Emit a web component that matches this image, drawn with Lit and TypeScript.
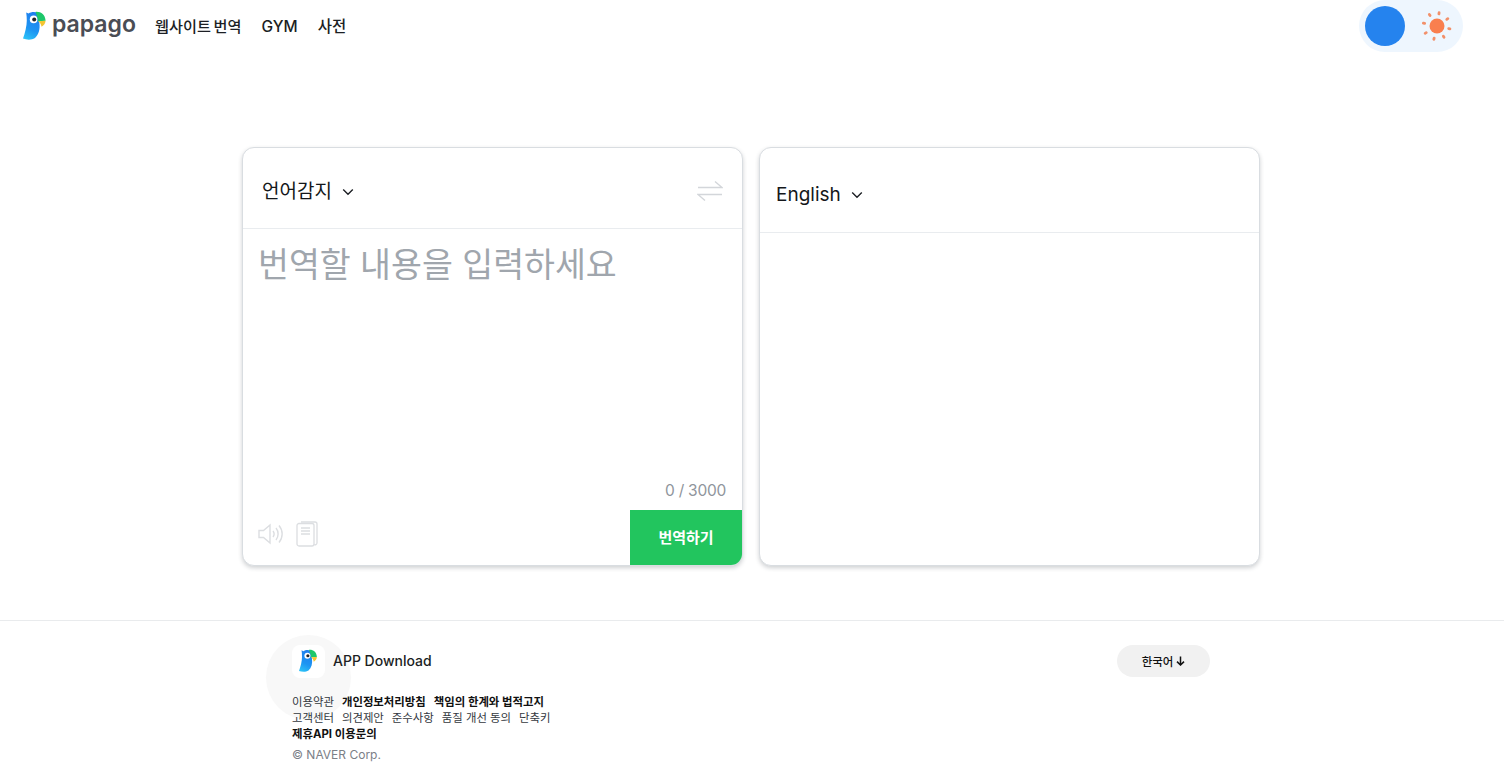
import { LitElement, html, css, svg } from "lit";
import { customElement } from "lit/decorators.js";

const parrot = svg`
  <defs>
    <linearGradient id="pb" x1="0.6" y1="0" x2="0.3" y2="1">
      <stop offset="0" stop-color="#1f7fee"/>
      <stop offset="0.6" stop-color="#1d94f2"/>
      <stop offset="1" stop-color="#2bc0f7"/>
    </linearGradient>
  </defs>
  <path d="M3.2 1.4 L5.6 2.6 C8 0.8 12 0.6 15 2 L16.4 12 C17.2 18 15.8 23.5 12 27 C8.5 29.2 4 29 0 27.6 C2 22 3.8 15 3.8 9.5 C3.8 6.5 3.6 4 3.2 1.4 Z" fill="url(#pb)"/>
  <path d="M12.5 0.9 C17.8 0.4 22.2 3.6 22.6 9.8 L15 10.2 C14.6 7 13.8 3.6 12.5 0.9 Z" fill="#1ec76a"/>
  <path d="M15 10.2 L22.6 9.8 C22.4 12.4 21 14.4 18.6 15.8 C18.2 13.4 17 11.4 15 10.2 Z" fill="#f4c531"/>
  <circle cx="10.6" cy="8.4" r="3.8" fill="#fff"/>
  <circle cx="11.2" cy="8.4" r="2" fill="#20252c"/>
`;

const rays: [number, number][] = [
  [-7.3, -11], [2, -12.7], [10.3, -7], [12.3, 2.7],
  [6.7, 10.7], [-3, 12.7], [-11.3, 7], [-13, -2.7],
];

@customElement("app-root")
export class AppRoot extends LitElement {
  static styles = css`
    :host {
      display: block;
      position: relative;
      width: 100%;
      height: 768px;
      overflow: hidden;
      background: #fff;
      font-family: Inter, "Noto Sans CJK KR", sans-serif;
      color: #111418;
    }
    .top {
      height: 52px;
      display: flex;
      align-items: center;
      padding: 0 41px 0 23px;
    }
    .logo-mark { width: 24px; height: 30px; flex: none; }
    .logo-text {
      margin-left: 5px;
      width: 83px;
      font-size: 23px;
      font-weight: 600;
      color: #4a4d55;
      line-height: 28px;
      position: relative;
      top: -2px;
    }
    nav {
      display: flex;
      gap: 20px;
      margin-left: 20px;
      padding-top: 2px;
      font-size: 15.5px;
      line-height: 20px;
      font-weight: 500;
      color: #1c1f24;
    }
    .tight { font-size: 15.2px; word-spacing: -1.4px; }
    .spacer { flex: 1; }
    .toggle {
      width: 104px;
      height: 52px;
      border-radius: 26px;
      background: #eef6fe;
      display: flex;
      align-items: center;
      padding: 0 6px;
      box-sizing: border-box;
      gap: 16px;
    }
    .knob { width: 40px; height: 40px; border-radius: 50%; background: #2583ee; flex: none; }
    .sun { width: 32px; height: 32px; flex: none; }
    main {
      display: flex;
      gap: 16px;
      padding: 95px 0 0 242px;
      height: 419px;
    }
    .card {
      width: 501px;
      height: 419px;
      box-sizing: border-box;
      border: 1px solid #d9dde1;
      border-radius: 12px;
      box-shadow: 0 2px 4px rgba(40, 50, 60, 0.22);
      display: flex;
      flex-direction: column;
      overflow: hidden;
      background: #fff;
    }
    .head {
      flex: none;
      display: flex;
      align-items: center;
      border-bottom: 1px solid #e9ecef;
      box-sizing: border-box;
    }
    .head.l { height: 81px; padding: 14px 19px 6px 19px; }
    .head.r { height: 85px; padding: 10px 16px 0 16px; }
    .lang { font-size: 19px; line-height: 26px; color: #14171a; }
    .chev { width: 12px; height: 8px; margin-left: 10px; flex: none; }
    .swap { width: 26px; height: 22px; margin-left: auto; position: relative; top: -1px; }
    .body { flex: 1; position: relative; display: flex; flex-direction: column; min-height: 0; }
    .ph {
      font-size: 33.6px;
      line-height: 46px;
      color: #a0a6ad;
      padding: 13px 0 0 15px;
    }
    .count {
      margin-top: auto;
      align-self: flex-end;
      padding-right: 16px;
      font-size: 15.5px;
      letter-spacing: -0.25px;
      line-height: 22px;
      color: #8f959c;
      margin-bottom: 8px;
    }
    .foot { height: 55px; display: flex; flex: none; align-items: center; padding-left: 15px; }
    .icons { display: flex; align-items: center; gap: 12px; position: relative; top: -4px; }
    .ico-a { width: 26px; height: 22px; }
    .ico-b { width: 22px; height: 26px; }
    .go {
      margin-left: auto;
      width: 112px;
      height: 55px;
      box-sizing: border-box;
      padding-bottom: 2px;
      background: #22c55e;
      color: #fff;
      font-size: 15px;
      font-weight: 700;
      display: flex;
      align-items: center;
      justify-content: center;
    }
    footer {
      position: absolute;
      left: 0;
      right: 0;
      top: 620px;
      bottom: 0;
      border-top: 1px solid #e9ebed;
      box-sizing: border-box;
      padding: 24px 294px 0 292px;
    }
    .halo {
      position: absolute;
      left: 266px;
      top: 14px;
      width: 85px;
      height: 85px;
      border-radius: 50%;
      background: #f8f8f8;
    }
    .frow { position: relative; display: flex; align-items: center; height: 32px; }
    .app {
      width: 33px;
      height: 33px;
      border-radius: 8px;
      background: #fff;
      display: flex;
      align-items: center;
      justify-content: center;
      flex: none;
    }
    .app svg { width: 19px; height: 24px; }
    .dl { margin-left: 8px; font-size: 14px; line-height: 18px; font-weight: 500; color: #1c1f24; }
    .pill {
      margin-left: auto;
      width: 93px;
      height: 32px;
      border-radius: 16px;
      background: #f1f1f1;
      display: flex;
      align-items: center;
      justify-content: center;
      gap: 3px;
      font-size: 11.5px;
      font-weight: 500;
      color: #111;
    }
    .pill svg { width: 9px; height: 10px; }
    .links {
      position: relative;
      margin-top: 17px;
      font-size: 11.4px;
      line-height: 16px;
      color: #33383e;
    }
    .line { display: flex; gap: 8px; height: 16px; }
    b { font-weight: 700; color: #111; }
    .copy { position: relative; margin-top: 5px; font-size: 12px; line-height: 16px; color: #7b8087; }
  `;

  render() {
    const chev = html`<svg class="chev" viewBox="0 0 12 8"><path d="M1.2 1.6 L6 6.2 L10.8 1.6" fill="none" stroke="#1c1f24" stroke-width="1.4"/></svg>`;
    return html`
      <header class="top">
        <svg class="logo-mark" viewBox="0 0 24 30">${parrot}</svg>
        <span class="logo-text">papago</span>
        <nav><span class="tight">웹사이트 번역</span><span>GYM</span><span>사전</span></nav>
        <div class="spacer"></div>
        <div class="toggle">
          <div class="knob"></div>
          <svg class="sun" viewBox="0 0 32 32">
            <circle cx="16" cy="16" r="7.5" fill="#f97f4f"/>
            <g stroke="#f2906a" stroke-width="2.8" stroke-linecap="round">
              ${rays.map(
                ([x, y]) => svg`<line x1=${16 + x * 0.95} y1=${16 + y * 0.95} x2=${16 + x * 1.05} y2=${16 + y * 1.05}></line>`
              )}
            </g>
          </svg>
        </div>
      </header>

      <main>
        <section class="card">
          <div class="head l">
            <span class="lang">언어감지</span>${chev}
            <svg class="swap" viewBox="0 0 26 22" fill="none" stroke="#d3d6da" stroke-width="1.4">
              <path d="M1 7.5 H25 L18 1.5"/><path d="M25 14.5 H1 L8 20.5"/>
            </svg>
          </div>
          <div class="body">
            <div class="ph">번역할 내용을 입력하세요</div>
            <div class="count">0 / 3000</div>
            <div class="foot">
              <div class="icons">
                <svg class="ico-a" viewBox="0 0 26 22" fill="none" stroke="#dcdee1" stroke-width="1.4">
                  <path d="M1 7.5 H5.5 L12 2 V20 L5.5 14.5 H1 Z"/>
                  <path d="M15 8 C16.5 10 16.5 12 15 14"/>
                  <path d="M18 5 C20.8 8.5 20.8 13.5 18 17"/>
                  <path d="M21 2.5 C25.2 7.5 25.2 14.5 21 19.5"/>
                </svg>
                <svg class="ico-b" viewBox="0 0 22 26" fill="none" stroke="#dcdee1" stroke-width="1.3">
                  <rect x="1" y="2.5" width="17" height="22.5" rx="2"/>
                  <path d="M5 1 H19 A2 2 0 0 1 21 3 V22 A2 2 0 0 1 18 23.5"/>
                  <path d="M5 7 H14 M5 10 H14 M5 13 H14"/>
                </svg>
              </div>
              <div class="go">번역하기</div>
            </div>
          </div>
        </section>
        <section class="card">
          <div class="head r"><span class="lang">English</span>${chev}</div>
        </section>
      </main>

      <footer>
        <div class="halo"></div>
        <div class="frow">
          <div class="app"><svg viewBox="0 0 24 30">${parrot}</svg></div>
          <span class="dl">APP Download</span>
          <div class="pill">한국어
            <svg viewBox="0 0 9 10" fill="none" stroke="#111" stroke-width="1.5"><path d="M4.5 0.5 V9 M1 5.6 L4.5 9 L8 5.6"/></svg>
          </div>
        </div>
        <div class="links">
          <div class="line"><span>이용약관</span><b>개인정보처리방침</b><b>책임의 한계와 법적고지</b></div>
          <div class="line"><span>고객센터</span><span>의견제안</span><span>준수사항</span><span>품질 개선 동의</span><span>단축키</span></div>
          <div class="line"><b>제휴API 이용문의</b></div>
        </div>
        <div class="copy">© NAVER Corp.</div>
      </footer>
    `;
  }
}
